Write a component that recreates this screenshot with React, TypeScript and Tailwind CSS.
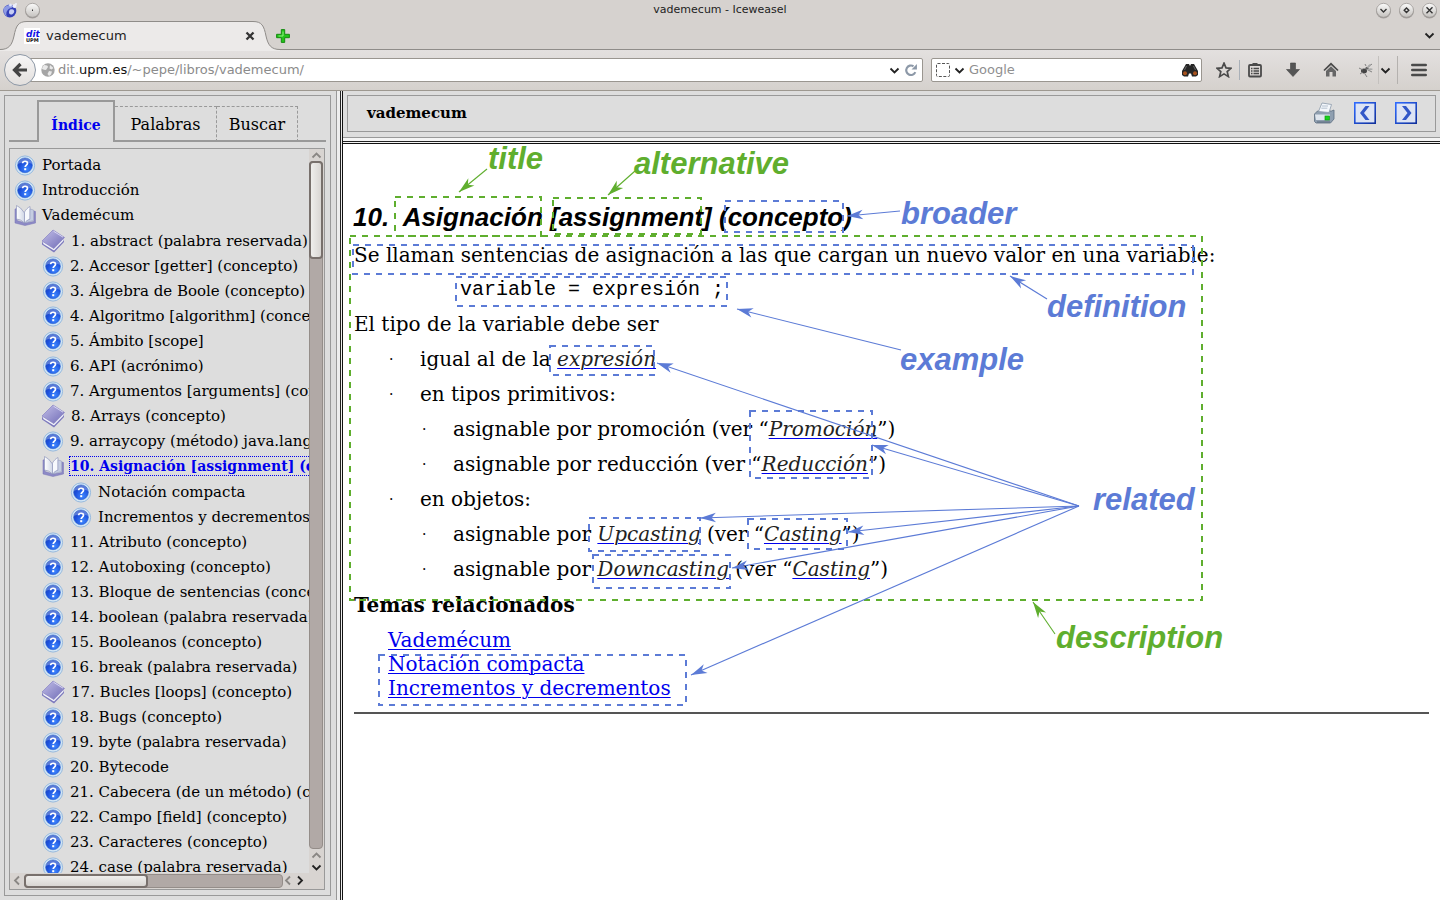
import React from "react";

type IconKind = "help" | "open" | "closed";
type Entry = { label: string; level: 0 | 1 | 2; icon: IconKind; active?: boolean };

const entries: Entry[] = [
  { label: "Portada", level: 0, icon: "help" },
  { label: "Introducción", level: 0, icon: "help" },
  { label: "Vademécum", level: 0, icon: "open" },
  { label: "1. abstract (palabra reservada)", level: 1, icon: "closed" },
  { label: "2. Accesor [getter] (concepto)", level: 1, icon: "help" },
  { label: "3. Álgebra de Boole (concepto)", level: 1, icon: "help" },
  { label: "4. Algoritmo [algorithm] (concepto)", level: 1, icon: "help" },
  { label: "5. Ámbito [scope]", level: 1, icon: "help" },
  { label: "6. API (acrónimo)", level: 1, icon: "help" },
  { label: "7. Argumentos [arguments] (concepto)", level: 1, icon: "help" },
  { label: "8. Arrays (concepto)", level: 1, icon: "closed" },
  { label: "9. arraycopy (método) java.lang.System", level: 1, icon: "help" },
  { label: "10. Asignación [assignment] (concepto)", level: 1, icon: "open", active: true },
  { label: "Notación compacta", level: 2, icon: "help" },
  { label: "Incrementos y decrementos", level: 2, icon: "help" },
  { label: "11. Atributo (concepto)", level: 1, icon: "help" },
  { label: "12. Autoboxing (concepto)", level: 1, icon: "help" },
  { label: "13. Bloque de sentencias (concepto)", level: 1, icon: "help" },
  { label: "14. boolean (palabra reservada)", level: 1, icon: "help" },
  { label: "15. Booleanos (concepto)", level: 1, icon: "help" },
  { label: "16. break (palabra reservada)", level: 1, icon: "help" },
  { label: "17. Bucles [loops] (concepto)", level: 1, icon: "closed" },
  { label: "18. Bugs (concepto)", level: 1, icon: "help" },
  { label: "19. byte (palabra reservada)", level: 1, icon: "help" },
  { label: "20. Bytecode", level: 1, icon: "help" },
  { label: "21. Cabecera (de un método) (concepto)", level: 1, icon: "help" },
  { label: "22. Campo [field] (concepto)", level: 1, icon: "help" },
  { label: "23. Caracteres (concepto)", level: 1, icon: "help" },
  { label: "24. case (palabra reservada)", level: 1, icon: "help" },
];

const indent = { 0: "pl-1", 1: "pl-8", 2: "pl-15" } as const;

function Defs() {
  return (
    <svg className="absolute size-0" aria-hidden="true">
      <defs>
        <radialGradient id="helpBlue" cx="0.6" cy="0.75" r="0.8">
          <stop offset="0" stopColor="#3d86ff" />
          <stop offset="0.6" stopColor="#1c50dc" />
          <stop offset="1" stopColor="#1a3fb4" />
        </radialGradient>
        <linearGradient id="bookViolet" x1="0" y1="0" x2="1" y2="1">
          <stop offset="0" stopColor="#c3bfe8" />
          <stop offset="1" stopColor="#6f6bb6" />
        </linearGradient>
        <linearGradient id="page" x1="0" y1="0" x2="1" y2="0">
          <stop offset="0" stopColor="#ffffff" />
          <stop offset="1" stopColor="#cfd6e6" />
        </linearGradient>
        <linearGradient id="knob" x1="0" y1="0" x2="0" y2="1">
          <stop offset="0" stopColor="#fbfbfa" />
          <stop offset="1" stopColor="#c4c1be" />
        </linearGradient>
        <linearGradient id="blueEdge" x1="0" y1="0" x2="1" y2="1">
          <stop offset="0" stopColor="#2f6bff" />
          <stop offset="1" stopColor="#10309c" />
        </linearGradient>
      </defs>
    </svg>
  );
}

function HelpIcon() {
  return (
    <svg viewBox="0 0 22 22" className="w-[22px] h-[22px] shrink-0" aria-hidden="true">
      <circle cx="11" cy="11.5" r="9.6" fill="#d3e6f5" stroke="#8fb4dc" strokeWidth="0.9" />
      <circle cx="11" cy="11.3" r="7.4" fill="url(#helpBlue)" stroke="#2f66cf" strokeWidth="0.6" />
      <path d="M4 9.8a7.2 7.2 0 0 1 14 0q-7 -3 -14 0z" fill="#fff" opacity="0.28" />
      <path d="M8.6 9.300c.2-2.800 5-2.700 4.900 0c0 1.700-2.300 1.900-2.300 3.700" fill="none" stroke="#fff" strokeWidth="1.700" />
      <rect x="10.200" y="14.200" width="2" height="2" fill="#fff" />
    </svg>
  );
}

function OpenBook() {
  return (
    <svg viewBox="0 0 22 22" className="w-[22px] h-[22px] shrink-0" aria-hidden="true">
      <path d="M1 5l2-.5v12l8 2.500 9-1.500V7l1.500.5V19L11 21.500 1 19z" fill="#8d8ac6" stroke="#7673b4" strokeWidth="0.5" />
      <path d="M2.500 1.500l4 2.500 4 5v10L6.500 16l-4-1z" fill="url(#page)" stroke="#8f96bb" strokeWidth="0.7" />
      <path d="M10.500 19V8c1.500-2.500 3-4.200 5.500-5.500v12.700c-2 .5-4 2-5.500 3.800z" fill="#f7f9fd" stroke="#8f96bb" strokeWidth="0.7" />
      <path d="M16 5l3.500 1v10.500L10.700 19c1.500-1.800 3.300-3.200 5.300-3.800z" fill="#c5cde2" stroke="#8f96bb" strokeWidth="0.5" />
    </svg>
  );
}

function ClosedBook() {
  return (
    <svg viewBox="0 0 24 24" className="-ml-px w-[24px] h-[24px] shrink-0" aria-hidden="true">
      <path d="M1 13l11.500 8L23 10v3L13 23.500 1 15.500z" fill="#7c79bd" />
      <path d="M2 12.800l10.800 7L22.500 9.500v2.200L13 21.500 2.300 15z" fill="#f1f2fa" />
      <path d="M1 12L12 1l11.500 7.500L12.800 19.500z" fill="url(#bookViolet)" stroke="#8683c3" strokeWidth="0.7" />
      <path d="M12.500 2.200L22 8.200" stroke="#d9d7f3" strokeWidth="1" fill="none" />
    </svg>
  );
}

function TreeIcon({ kind }: { kind: IconKind }) {
  if (kind === "help") return <HelpIcon />;
  return kind === "open" ? <OpenBook /> : <ClosedBook />;
}

function Chevron({ dir, color = "#222" }: { dir: "up" | "down" | "left" | "right"; color?: string }) {
  const d = {
    up: "M1.500 7.500L5.500 3.500L9.500 7.500",
    down: "M1.500 3.500L5.500 7.500L9.500 3.500",
    left: "M7 1.500L3 5.500L7 9.500",
    right: "M4 1.500L8 5.500L4 9.500",
  }[dir];
  return (
    <svg viewBox="0 0 11 11" className="w-[11px] h-[11px] shrink-0" aria-hidden="true">
      <path d={d} fill="none" stroke={color} strokeWidth="1.800" />
    </svg>
  );
}

function WindowButton({ label, d }: { label: string; d: string }) {
  return (
    <button type="button" aria-label={label} className="block">
      <svg viewBox="0 0 17 17" className="w-[17px] h-[17px]" aria-hidden="true">
        <circle cx="8.500" cy="9" r="7.400" fill="#8d8986" opacity="0.7" />
        <circle cx="8.500" cy="8.300" r="7" fill="url(#knob)" stroke="#96928f" strokeWidth="0.7" />
        <path d={d} fill="none" stroke="#333" strokeWidth="1.400" />
      </svg>
    </button>
  );
}

function TitleBar() {
  return (
    <header className="flex h-5 items-center justify-between px-0.5 font-['DejaVu_Sans']">
      <div className="flex w-20 items-center gap-1.5">
        <svg viewBox="0 0 16 16" className="size-4" aria-hidden="true">
          <circle cx="7.800" cy="9" r="6.500" fill="#3440b8" />
          <path d="M1.500 6.500q3-4 7-3.500l3 1-2 2q-3 0-5 4-1 3 1 5-4-2-4-8.500z" fill="#8d9ae4" />
          <path d="M8 7.500q3-1 4 1t-2 4q-3 0-3-2 0-2 1-3z" fill="#c6cdf5" />
          <circle cx="12.500" cy="4" r="2" fill="#eef0fb" />
          <circle cx="8.500" cy="3" r="1.500" fill="#dfe4f8" />
          <circle cx="14" cy="2" r="1" fill="#eef0fb" />
        </svg>
        <WindowButton label="Menú de la ventana" d="M8 8.300h1" />
      </div>
      <div className="text-[11px] leading-5 text-[#222]">vademecum - Iceweasel</div>
      <div className="flex w-20 items-center justify-end gap-1.5">
        <WindowButton label="Minimizar" d="M5.500 7L8.500 10L11.500 7" />
        <WindowButton label="Maximizar" d="M8.500 6L10.800 8.300L8.500 10.600L6.200 8.300Z" />
        <WindowButton label="Cerrar" d="M5.500 5.300L11.500 11.300M11.500 5.300L5.500 11.300" />
      </div>
    </header>
  );
}

function TabStrip() {
  return (
    <div className="relative flex h-[30px] items-stretch border-b border-[#8f8c89] font-['DejaVu_Sans']">
      <div className="relative flex w-[270px] items-center pt-0.5 pr-[15px] pl-6">
        <svg viewBox="0 0 280 31" className="absolute top-0 left-0 h-[31px] w-[280px]" aria-hidden="true">
          <path d="M0 29.500C9 29.500 12 25 14 16C16 6 18 1.500 27 1.500H253C262 1.500 264 6 266 16C268 25 271 29.500 280 29.500V31H0z" fill="#eceae9" />
          <path d="M0 29.500C9 29.500 12 25 14 16C16 6 18 1.500 27 1.500H253C262 1.500 264 6 266 16C268 25 271 29.500 280 29.500" fill="none" stroke="#8f8c89" />
        </svg>
        <svg viewBox="0 0 16 16" className="relative size-4" aria-hidden="true">
          <rect width="16" height="16" fill="#fff" />
          <text x="2" y="8.500" fontFamily="DejaVu Sans" fontSize="9" fontWeight="700" fontStyle="italic" fill="#1414e6">dit</text>
          <text x="2" y="14" fontFamily="DejaVu Sans" fontSize="5" fontWeight="700" fill="#111">UPM</text>
        </svg>
        <span className="relative ml-1.5 flex-1 text-[13px] leading-5 text-[#222]">vademecum</span>
        <button type="button" aria-label="Cerrar pestaña" className="relative">
          <svg viewBox="0 0 10 10" className="size-2.5" aria-hidden="true">
            <path d="M1.500 1.500L8.500 8.500M8.500 1.500L1.500 8.500" stroke="#333" strokeWidth="2.300" />
          </svg>
        </button>
      </div>
      <button type="button" aria-label="Nueva pestaña" className="relative ml-1.5 pt-0.5">
        <svg viewBox="0 0 14 14" className="size-3.5" aria-hidden="true">
          <path d="M5.300 .6h3.400v4.700h4.700v3.400h-4.700v4.700h-3.400v-4.700H.6v-3.400h4.700z" fill="#22c41a" stroke="#178a12" />
          <path d="M7 2.500v4.500H2.500" fill="none" stroke="#8cf07e" />
        </svg>
      </button>
      <button type="button" aria-label="Listar pestañas" className="mr-[5px] ml-auto pt-0.5"><Chevron dir="down" /></button>
    </div>
  );
}

function NavBar() {
  return (
    <div className="flex h-[41px] items-center border-b border-[#9d9890] bg-linear-to-b from-[#e3e0df] to-[#d5d1cd] pr-[13px] pl-1 font-['DejaVu_Sans'] text-[13px]">
      <button type="button" aria-label="Atrás" className="relative z-10 flex size-8 shrink-0 items-center justify-center rounded-full border border-[#8d98a6] bg-linear-to-b from-[#f7f6f6] to-[#e2dfdd]">
        <svg viewBox="0 0 16 16" className="size-4" aria-hidden="true">
          <path d="M8.500 2L2.500 8l6 6M3 8h12" fill="none" stroke="#444" strokeWidth="3.200" />
        </svg>
      </button>
      <div className="-ml-2 flex h-6 flex-1 items-center rounded-xs border border-[#9a9690] bg-white pr-1 pl-3 text-[#8b8b8b]">
        <svg viewBox="0 0 14 14" className="size-3.5" aria-hidden="true">
          <circle cx="7" cy="7" r="6.700" fill="#a5a5a5" />
          <path d="M3 2q4 0 4 2l-2 3q-2 0-4-1 0-2 2-4zM9 2l3.500 3-2 1.500-2-1zM8 8l3 .500-1 3-2 1.500-1.500-2z" fill="#e9e9e9" />
        </svg>
        <div className="ml-[3px] flex-1 leading-5" role="textbox" aria-label="Dirección">
          dit.<span className="text-[#111]">upm.es</span>/~pepe/libros/vademecum/
        </div>
        <button type="button" aria-label="Historial"><Chevron dir="down" /></button>
        <button type="button" aria-label="Recargar" className="ml-1">
          <svg viewBox="0 0 13 13" className="size-3.5" aria-hidden="true">
            <path d="M10.500 8.500A4.400 4.400 0 1 1 8.800 3" fill="none" stroke="#8d99a8" strokeWidth="2" />
            <path d="M12 1v5H7z" fill="#8d99a8" />
          </svg>
        </button>
      </div>
      <div className="ml-2 flex h-6 w-[271px] items-center rounded-xs border border-[#9a9690] bg-white pr-0.5 pl-1">
        <svg viewBox="0 0 14 14" className="size-3.5" aria-hidden="true">
          <rect x="0.500" y="0.500" width="13" height="13" rx="1" fill="none" stroke="#555" strokeDasharray="3 1.500" />
        </svg>
        <span className="ml-1 flex"><Chevron dir="down" /></span>
        <input aria-label="Buscar en Google" placeholder="Google" className="ml-1 w-0 flex-1 bg-transparent leading-5 placeholder:text-[#8f8f8f]" />
        <svg viewBox="0 0 18 14" className="h-3.5 w-[18px]" aria-hidden="true">
          <path d="M5 1h3l1 2 1-2h3l4 7v4l-2 1.500h-4l-1-3H8l-1 3H3L1 12V8z" fill="#262626" />
          <circle cx="4" cy="10.300" r="2" fill="#a8521d" />
          <circle cx="14" cy="10.300" r="2" fill="#a8521d" />
          <path d="M5.500 3L3.500 7M12.500 3l2 4" stroke="#777" strokeWidth="0.800" />
        </svg>
      </div>
      <div className="flex items-center text-[#4a4a4a]">
        <button type="button" aria-label="Añadir a marcadores" className="ml-3.5">
          <svg viewBox="0 0 16 16" className="size-4" aria-hidden="true">
            <path d="M8 1.200l2 4.700 5 .4-3.800 3.300 1.200 5L8 11.900l-4.400 2.700 1.200-5L1 6.300l5-.4z" fill="none" stroke="currentColor" strokeWidth="1.700" />
          </svg>
        </button>
        <span className="ml-[7px] h-5 border-l border-[#a9b0b8]" />
        <button type="button" aria-label="Marcadores" className="ml-2">
          <svg viewBox="0 0 14 16" className="h-4 w-3.5" aria-hidden="true">
            <rect x="1" y="3" width="12" height="11.500" rx="1" fill="none" stroke="currentColor" strokeWidth="1.800" />
            <path d="M4.500 3.500V1h5v2.500z" fill="currentColor" />
            <path d="M3 6.500h1.500M5.500 6.500H11M3 9h1.500M5.500 9H11M3 11.500h1.500M5.500 11.500H11" stroke="currentColor" strokeWidth="1.300" />
          </svg>
        </button>
        <button type="button" aria-label="Descargas" className="ml-6">
          <svg viewBox="0 0 14 16" className="h-4 w-3.5" aria-hidden="true">
            <path d="M4.500 1h5v6.500H13.500L7 14.500.5 7.500h4z" fill="#555" stroke="#444" strokeWidth="0.600" />
          </svg>
        </button>
        <button type="button" aria-label="Inicio" className="ml-[23px]">
          <svg viewBox="0 0 16 16" className="size-4" aria-hidden="true">
            <path d="M1 8.500L8 1.800l7 6.700" fill="none" stroke="currentColor" strokeWidth="1.700" />
            <path d="M3 9l5-4.700L13 9v5.500H9.500v-4.500h-3v4.500H3z" fill="#666" />
          </svg>
        </button>
        <button type="button" aria-label="Complemento" className="ml-[19px]">
          <svg viewBox="0 0 16 16" className="size-4" aria-hidden="true">
            <ellipse cx="6" cy="9" rx="3" ry="2.400" fill="#444" />
            <circle cx="9" cy="6.500" r="1.700" fill="#666" />
            <path d="M1 6l4 2M2 12l3-2M7 12l2 3M10 8l4 2M10 5l4-3M8 4L7 2" stroke="#777" strokeWidth="0.900" />
            <path d="M8 8q4-3 7-1-1 2-7 1zM9 6q1-4 4-4 0 3-4 4z" fill="#aaa" />
          </svg>
        </button>
        <span className="ml-1 h-7 border-l border-[#c4c1be]" />
        <button type="button" aria-label="Más" className="ml-px"><Chevron dir="down" /></button>
        <span className="ml-1.5 h-7 border-l border-[#b4b1ae]" />
        <button type="button" aria-label="Menú" className="ml-[13px]">
          <svg viewBox="0 0 16 14" className="h-3.5 w-4" aria-hidden="true">
            <path d="M1.300 2h13.400M1.300 7h13.400M1.300 12h13.400" stroke="currentColor" strokeWidth="2.600" strokeLinecap="round" />
          </svg>
        </button>
      </div>
    </div>
  );
}

function Sidebar() {
  return (
    <aside className="flex w-[337px] shrink-0 flex-col border-r border-[#999] bg-[#ddd] pt-1 pr-[5px] pb-1 pl-1">
      <div className="flex min-h-0 flex-1 flex-col border border-[#999] px-1 pt-1 pb-[5px]">
        <nav className="flex items-end text-base leading-6">
          <span className="w-7 border-b-2 border-[#999]" />
          <button type="button" className="flex h-[42px] w-[78px] items-center justify-center border-2 border-b-0 border-[#999] pt-1.5 text-[14px] font-bold text-[#0000ee]">Índice</button>
          <button type="button" className="flex h-9 w-[102px] items-center justify-center border-t border-r border-dashed border-[#999] shadow-[inset_0_-2px_0_#999]">Palabras</button>
          <button type="button" className="flex h-9 w-[81px] items-center justify-center border-t border-r border-dashed border-[#999] shadow-[inset_0_-2px_0_#999]">Buscar</button>
          <span className="flex-1 border-b-2 border-[#999]" />
        </nav>
        <div className="mt-1.5 mr-px flex min-h-0 flex-1 flex-col border border-[#999]">
          <div className="flex min-h-0 flex-1">
            <ul className="min-w-0 flex-1 overflow-hidden pt-[3px] text-[15px] whitespace-nowrap">
              {entries.map((e) => (
                <li key={e.label} className={`flex items-center gap-[5px] ${indent[e.level]} ${e.icon === "open" ? "h-[26px]" : "h-[25px]"}`}>
                  <TreeIcon kind={e.icon} />
                  <a href="#" className={e.active ? "border border-dotted border-[#0000ee] pr-5 text-[14px] leading-[18px] font-bold text-[#0000ee]" : "pl-px leading-[22px] text-black"}>
                    {e.label}
                  </a>
                </li>
              ))}
            </ul>
            <div className="flex w-[15px] flex-col items-center bg-[#d8d4d1] pr-px" aria-hidden="true">
              <div className="flex h-3 items-center"><Chevron dir="up" color="#8a8784" /></div>
              <div className="w-[14px] flex-1 rounded-sm border border-[#948d89] bg-[#b1a9a6]">
                <div className="-mx-px -mt-px h-[98px] rounded-sm border-2 border-[#78706c] bg-linear-to-r from-[#efeeec] to-[#d9d6d3]" />
              </div>
              <div className="flex h-3 items-center"><Chevron dir="up" color="#8a8784" /></div>
              <div className="flex h-3 items-center"><Chevron dir="down" /></div>
            </div>
          </div>
          <div className="flex h-4 items-center bg-[#d8d4d1] pr-[19px] pb-px" aria-hidden="true">
            <div className="flex w-3.5 justify-center"><Chevron dir="left" color="#8a8784" /></div>
            <div className="h-[14px] flex-1 rounded-sm border border-[#948d89] bg-[#b1a9a6]">
              <div className="-mt-px -ml-px h-[14px] w-[124px] rounded-sm border-2 border-[#78706c] bg-linear-to-b from-[#efeeec] to-[#d9d6d3]" />
            </div>
            <Chevron dir="left" color="#8a8784" />
            <Chevron dir="right" />
          </div>
        </div>
      </div>
    </aside>
  );
}

function Toolbar() {
  return (
    <div className="border-b border-[#999] bg-[#ddd] p-1 pb-[5px]">
      <div className="flex h-[37px] items-center justify-between border border-[#999] pr-[18px] pl-[19px]">
        <h2 className="pb-0.5 text-[15px] leading-5 font-bold">vademecum</h2>
        <div className="flex items-center gap-[19px] pb-px">
          <button type="button" aria-label="Imprimir">
            <svg viewBox="0 0 22 22" className="w-[22px] h-[22px]" aria-hidden="true">
              <path d="M1.500 12l3-3h14l2.500-1v9l-3.500 4H3l-1.500-1.500z" fill="#8f9fb0" stroke="#5c6d80" strokeWidth="0.800" />
              <path d="M2 12.500h15v5.500H3z" fill="#dfe6ee" />
              <path d="M5.500 9.500L9 1l9.500 1.500L16 10.500z" fill="#f4f7fb" stroke="#8a99aa" strokeWidth="0.800" />
              <path d="M9 4h6M8.300 6.200h6" stroke="#a4b2c4" strokeWidth="0.800" />
              <rect x="12" y="14" width="4.500" height="4" fill="#19d419" stroke="#0b9a12" strokeWidth="0.700" />
              <path d="M4 20h13" stroke="#5c6d80" />
            </svg>
          </button>
          <button type="button" aria-label="Anterior">
            <svg viewBox="0 0 22 22" className="w-[22px] h-[22px]" aria-hidden="true">
              <rect x="0.800" y="0.800" width="20.400" height="20.400" fill="#dde4f4" stroke="url(#blueEdge)" strokeWidth="1.600" />
              <path d="M15.500 4h-4L6 11l5.500 7h4L10 11z" fill="#3157c8" />
            </svg>
          </button>
          <button type="button" aria-label="Siguiente">
            <svg viewBox="0 0 22 22" className="w-[22px] h-[22px]" aria-hidden="true">
              <rect x="0.800" y="0.800" width="20.400" height="20.400" fill="#dde4f4" stroke="url(#blueEdge)" strokeWidth="1.600" />
              <path d="M7 4h4l5.500 7-5.500 7H7l5.500-7z" fill="#3157c8" />
            </svg>
          </button>
        </div>
      </div>
    </div>
  );
}

const GREEN = "#5fae2e";
const BLUE = "#5c7bd6";

/* Each box is [left, top, right, bottom]; each arrow is [tail x, tail y, tip x, tip y]. */
const greenBoxes = [[395, 197, 541, 236], [553, 198, 701, 234], [350, 236, 1202, 600]];
const blueBoxes = [
  [725, 201, 843, 232], [353, 245, 1193, 274], [456, 277, 727, 306], [550, 346, 654, 375],
  [750, 411, 872, 478], [589, 518, 700, 551], [748, 519, 847, 549], [593, 555, 730, 588],
  [379, 655, 686, 705],
];
const greenArrows = [[487, 169, 459, 192], [635, 171, 608, 195], [1055, 634, 1033, 602]];
const blueArrows = [
  [900, 211, 847, 216], [1047, 299, 1010, 276], [901, 350, 737, 309], [1079, 506, 657, 363],
  [1079, 506, 872, 445], [1079, 506, 700, 518], [1079, 506, 848, 532], [1079, 506, 732, 568],
  [1079, 506, 691, 675],
];

function Boxes({ items, color }: { items: number[][]; color: string }) {
  return (
    <g fill="none" stroke={color} strokeWidth="2" strokeDasharray="6 6">
      {items.map(([x1, y1, x2, y2], i) => (
        <rect key={i} x={x1} y={y1} width={x2 - x1} height={y2 - y1} />
      ))}
    </g>
  );
}

function Arrows({ items, color }: { items: number[][]; color: string }) {
  return (
    <g stroke={color} fill={color}>
      {items.map(([x1, y1, x2, y2], i) => {
        const angle = (Math.atan2(y1 - y2, x1 - x2) * 180) / Math.PI;
        return (
          <g key={i}>
            <line x1={x1} y1={y1} x2={x2} y2={y2} strokeWidth="1.100" />
            <path d="M0 0L16 -4.800L11.500 0L16 4.800Z" stroke="none" transform={`translate(${x2} ${y2}) rotate(${angle})`} />
          </g>
        );
      })}
    </g>
  );
}

function Annotations() {
  const label = "absolute font-['Liberation_Sans'] text-[31px] leading-[34px] font-bold italic";
  return (
    <div className="pointer-events-none absolute inset-0">
      <svg className="absolute inset-0 size-full" aria-hidden="true">
        <g transform="translate(-343 -144)">
          <Boxes items={greenBoxes} color={GREEN} />
          <Boxes items={blueBoxes} color={BLUE} />
          <Arrows items={greenArrows} color={GREEN} />
          <Arrows items={blueArrows} color={BLUE} />
        </g>
      </svg>
      <span className={`${label} top-[-2px] left-[145px] text-[#5fae2e]`}>title</span>
      <span className={`${label} top-[3px] left-[291px] text-[#5fae2e]`}>alternative</span>
      <span className={`${label} top-[53px] left-[558px] text-[#5c7bd6]`}>broader</span>
      <span className={`${label} top-[146px] left-[704px] text-[#5c7bd6]`}>definition</span>
      <span className={`${label} top-[199px] left-[557px] text-[#5c7bd6]`}>example</span>
      <span className={`${label} top-[339px] left-[750px] text-[#5c7bd6]`}>related</span>
      <span className={`${label} top-[477px] left-[713px] text-[#5fae2e]`}>description</span>
    </div>
  );
}

function Term({ children }: { children: React.ReactNode }) {
  return <a href="#" className="text-[#222] italic underline decoration-[#0000ee] decoration-1 underline-offset-2">{children}</a>;
}

function Item({ children }: { children: React.ReactNode }) {
  return (
    <li className="flex">
      <span className="w-[33px] pl-0.5 text-sm leading-[35px]">·</span>
      <span>{children}</span>
    </li>
  );
}

function Article() {
  return (
    <main className="relative flex-1 bg-white px-[11px] pt-[55px] text-[20px] leading-[35px]">
      <h1 className="-ml-px mb-[3px] font-['Liberation_Sans'] text-[26px] leading-9 font-bold whitespace-pre italic">10.  Asignación [assignment] (concepto)</h1>
      <p>Se llaman sentencias de asignación a las que cargan un nuevo valor en una variable:</p>
      <pre className="pl-[106px] font-['Liberation_Mono'] leading-[33px]">variable = expresión ;</pre>
      <p className="mt-px">El tipo de la variable debe ser</p>
      <ul className="pl-[33px]">
        <Item>igual al de la <Term>expresión</Term></Item>
        <Item>en tipos primitivos:</Item>
        <li>
          <ul className="pl-[33px]">
            <Item>asignable por promoción (ver “<Term>Promoción</Term>”)</Item>
            <Item>asignable por reducción (ver “<Term>Reducción</Term>”)</Item>
          </ul>
        </li>
        <Item>en objetos:</Item>
        <li>
          <ul className="pl-[33px]">
            <Item>asignable por <Term>Upcasting</Term> (ver “<Term>Casting</Term>”)</Item>
            <Item>asignable por <Term>Downcasting</Term> (ver “<Term>Casting</Term>”)</Item>
          </ul>
        </li>
      </ul>
      <h3 className="mt-px font-bold">Temas relacionados</h3>
      <ul className="mt-[5px] pl-[34px] leading-6 text-[#0000ee] underline decoration-1 underline-offset-2">
        <li><a href="#">Vademécum</a></li>
        <li><a href="#">Notación compacta</a></li>
        <li><a href="#">Incrementos y decrementos</a></li>
      </ul>
      <hr className="mt-3 border-t-2 border-[#555]" />
      <Annotations />
    </main>
  );
}

export default function App() {
  return (
    <div className="flex h-screen flex-col overflow-hidden bg-[#d6d2cf] font-['DejaVu_Serif',serif] text-black">
      <Defs />
      <TitleBar />
      <TabStrip />
      <NavBar />
      <div className="flex min-h-0 flex-1">
        <Sidebar />
        <div className="w-1.5 shrink-0 border-r border-[#111] bg-[#eee]">
          <div className="ml-[3px] h-full w-px bg-[#222]" />
        </div>
        <div className="flex min-w-0 flex-1 flex-col">
          <Toolbar />
          <div className="h-1.5 border-b border-[#111] bg-[#f4f4f4] pt-[3px]">
            <div className="h-px bg-[#222]" />
          </div>
          <Article />
        </div>
      </div>
    </div>
  );
}
